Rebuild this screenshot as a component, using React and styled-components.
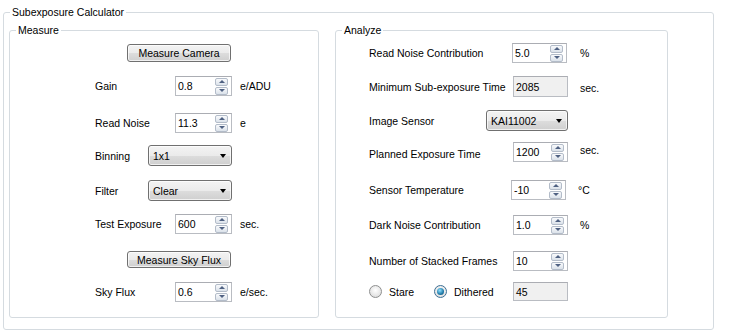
import styled, { createGlobalStyle } from "styled-components";

const GlobalStyle = createGlobalStyle`
  body {
    margin: 0;
    background: #ffffff;
    font-family: "Liberation Sans", Arial, sans-serif;
    font-size: 10.5px;
    color: #000;
  }
`;

const Page = styled.div`
  width: 731px;
  height: 332px;
  box-sizing: border-box;
  padding: 12px 0 0 3px;
`;

const GroupBox = styled.section`
  position: relative;
  box-sizing: border-box;
  width: ${(p) => p.$w}px;
  height: ${(p) => p.$h}px;
  border: 1px solid #d5dbe0;
  border-radius: 3px;
`;

const Caption = styled.span`
  position: absolute;
  top: -7px;
  left: 6px;
  padding: 0 2px;
  background: #fff;
  line-height: 13px;
  white-space: nowrap;
`;

const Columns = styled.div`
  display: flex;
  gap: 16px;
  padding: 17px 0 0 5px;
`;

const Stack = styled.div`
  display: flex;
  flex-direction: column;
`;

const Row = styled.div`
  display: flex;
  align-items: center;
  margin-top: ${(p) => p.$top}px;
  padding-left: ${(p) => p.$indent}px;
`;

const Label = styled.span`
  width: ${(p) => p.$w}px;
  flex: none;
  white-space: nowrap;
  position: relative;
  top: ${(p) => p.$shift || 0}px;
`;

const Unit = styled.span`
  margin-left: ${(p) => p.$gap}px;
  white-space: nowrap;
  position: relative;
  top: ${(p) => p.$shift || 0}px;
`;

const winGradient = `
  background: linear-gradient(#f3f3f3 0%, #ebebeb 50%, #dddddd 51%, #cfcfcf 100%);
  border: 1px solid #707070;
  border-radius: 3px;
  box-shadow: inset 0 0 0 1px rgba(255, 255, 255, 0.7);
`;

const Button = styled.button`
  ${winGradient}
  box-sizing: border-box;
  width: 104px;
  height: ${(p) => p.$h}px;
  padding: 0;
  font: inherit;
  color: #000;
`;

const Field = styled.div`
  box-sizing: border-box;
  width: ${(p) => p.$w}px;
  height: ${(p) => p.$h || 20}px;
  display: flex;
  align-items: center;
  justify-content: space-between;
  padding: 0 2px 0 2px;
  background: ${(p) => (p.$readOnly ? "#f0f0f0" : "#fff")};
  border: 1px solid #b9bcc2;
  border-top-color: #abadb3;
`;

const SpinCol = styled.div`
  display: flex;
  flex-direction: column;
  gap: 1px;
  margin-right: 1px;
`;

const SpinBtn = styled.div`
  width: 13px;
  height: 8px;
  box-sizing: border-box;
  border: 1px solid #b3bcc9;
  border-radius: 2px;
  background: linear-gradient(#f9fafc, #dbe2ea);
  display: flex;
  align-items: center;
  justify-content: center;

  &::after {
    content: "";
    border-left: 3px solid transparent;
    border-right: 3px solid transparent;
    ${(p) =>
      p.$down
        ? "border-top: 3px solid #4f6182;"
        : "border-bottom: 3px solid #4f6182;"}
  }
`;

const Combo = styled.div`
  ${winGradient}
  box-sizing: border-box;
  width: ${(p) => p.$w}px;
  height: 21px;
  display: flex;
  align-items: center;
  justify-content: space-between;
  padding: 0 5px 0 4px;

  &::after {
    content: "";
    border-left: 3.5px solid transparent;
    border-right: 3.5px solid transparent;
    border-top: 4px solid #000;
  }
`;

const RadioOption = styled.label`
  display: flex;
  align-items: center;
  gap: 7px;
  width: ${(p) => p.$w}px;
`;

const RadioDot = styled.span`
  box-sizing: border-box;
  width: 13px;
  height: 13px;
  border-radius: 50%;
  border: 1px solid ${(p) => (p.$checked ? "#3d6f95" : "#8e8f8f")};
  background: radial-gradient(circle at 50% 40%, #ffffff, #d6d6d6);
  display: flex;
  align-items: center;
  justify-content: center;

  &::after {
    content: "";
    display: ${(p) => (p.$checked ? "block" : "none")};
    width: 7px;
    height: 7px;
    border-radius: 50%;
    background: radial-gradient(circle at 40% 35%, #8fe0ff, #1f7aa8 60%, #0f4466);
  }
`;

function Spinner({ value, w = 57 }) {
  return (
    <Field $w={w}>
      <span>{value}</span>
      <SpinCol>
        <SpinBtn />
        <SpinBtn $down />
      </SpinCol>
    </Field>
  );
}

function MeasurePanel() {
  return (
    <GroupBox $w={310} $h={288}>
      <Caption>Measure</Caption>
      <Stack>
        <Row $top={13} $indent={117}>
          <Button $h={18}>Measure Camera</Button>
        </Row>
        <Row $top={14} $indent={85}>
          <Label $w={80}>Gain</Label>
          <Spinner value="0.8" />
          <Unit $gap={8}>e/ADU</Unit>
        </Row>
        <Row $top={17} $indent={85}>
          <Label $w={80}>Read Noise</Label>
          <Spinner value="11.3" />
          <Unit $gap={8}>e</Unit>
        </Row>
        <Row $top={12} $indent={85}>
          <Label $w={53}>Binning</Label>
          <Combo $w={84}>1x1</Combo>
        </Row>
        <Row $top={14} $indent={85}>
          <Label $w={53}>Filter</Label>
          <Combo $w={84}>Clear</Combo>
        </Row>
        <Row $top={13} $indent={85}>
          <Label $w={80}>Test Exposure</Label>
          <Spinner value="600" />
          <Unit $gap={8}>sec.</Unit>
        </Row>
        <Row $top={17} $indent={117}>
          <Button $h={17}>Measure Sky Flux</Button>
        </Row>
        <Row $top={14} $indent={85}>
          <Label $w={80}>Sky Flux</Label>
          <Spinner value="0.6" />
          <Unit $gap={8}>e/sec.</Unit>
        </Row>
      </Stack>
    </GroupBox>
  );
}

function AnalyzePanel() {
  return (
    <GroupBox $w={333} $h={288}>
      <Caption>Analyze</Caption>
      <Stack>
        <Row $top={12} $indent={33}>
          <Label $w={143}>Read Noise Contribution</Label>
          <Spinner value="5.0" w={55} />
          <Unit $gap={13}>%</Unit>
        </Row>
        <Row $top={13} $indent={33}>
          <Label $w={144}>Minimum Sub-exposure Time</Label>
          <Field $w={55} $h={21} $readOnly>
            2085
          </Field>
          <Unit $gap={12} $shift={1}>sec.</Unit>
        </Row>
        <Row $top={13} $indent={33}>
          <Label $w={117}>Image Sensor</Label>
          <Combo $w={82}>KAI11002</Combo>
        </Row>
        <Row $top={11} $indent={33}>
          <Label $w={144} $shift={2}>Planned Exposure Time</Label>
          <Spinner value="1200" w={55} />
          <Unit $gap={12} $shift={-2}>sec.</Unit>
        </Row>
        <Row $top={18} $indent={33}>
          <Label $w={142}>Sensor Temperature</Label>
          <Spinner value="-10" w={55} />
          <Unit $gap={12}>°C</Unit>
        </Row>
        <Row $top={15} $indent={33}>
          <Label $w={144}>Dark Noise Contribution</Label>
          <Spinner value="1.0" w={55} />
          <Unit $gap={12}>%</Unit>
        </Row>
        <Row $top={16} $indent={33}>
          <Label $w={144}>Number of Stacked Frames</Label>
          <Spinner value="10" w={55} />
        </Row>
        <Row $top={11} $indent={33}>
          <RadioOption $w={65}>
            <RadioDot />
            Stare
          </RadioOption>
          <RadioOption $w={79}>
            <RadioDot $checked />
            Dithered
          </RadioOption>
          <Field $w={55} $h={19} $readOnly>
            45
          </Field>
        </Row>
      </Stack>
    </GroupBox>
  );
}

export default function App() {
  return (
    <>
      <GlobalStyle />
      <Page>
        <GroupBox $w={711} $h={318}>
          <Caption>Subexposure Calculator</Caption>
          <Columns>
            <MeasurePanel />
            <AnalyzePanel />
          </Columns>
        </GroupBox>
      </Page>
    </>
  );
}
